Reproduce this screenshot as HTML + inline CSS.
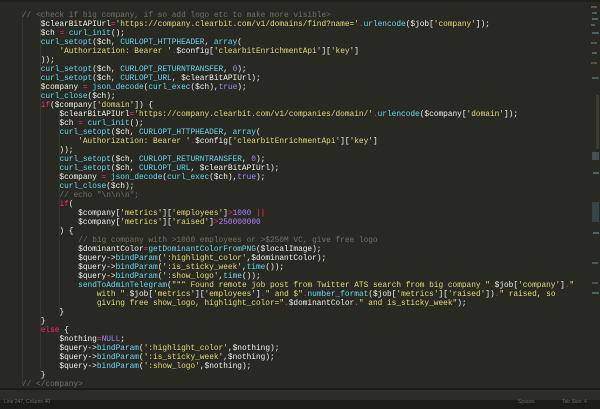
<!DOCTYPE html>
<html><head><meta charset="utf-8"><style>
html,body{margin:0;padding:0;width:600px;height:409px;overflow:hidden;background:#282923;}
.ed{position:absolute;left:0;top:0;width:600px;height:388px;background:#282923;}
.topbar{position:absolute;left:0;top:0;width:600px;height:2px;background:#1f201c;}
pre{position:absolute;left:22px;top:12px;margin:0;font-family:"Liberation Mono",monospace;font-size:7.8px;line-height:9px;color:#f2f2ec;white-space:pre;}
.c{color:#75715e}.s{color:#e6db74}.f{color:#66d9ef}.k{color:#f92672}.n{color:#ae81ff}
.g{position:absolute;top:12px;width:1px;background:#363731;}
.sep{position:absolute;left:0;top:388px;width:600px;height:2px;background:#1c1d19;}
.panel{position:absolute;left:0;top:390px;width:600px;height:10px;background:#2c2d28;}
.status{position:absolute;left:0;top:400px;width:600px;height:9px;background:#1b1b18;font-family:"Liberation Sans",sans-serif;font-size:5px;color:#6a6a64;line-height:14px;}
.mm{position:absolute;left:590px;top:2px;width:10px;height:386px;opacity:.6}
.mm div{position:absolute;height:1.5px;}
</style></head><body>
<div class="ed"></div>
<div class="topbar"></div>
<div class="g" style="left:22px;height:372px"></div>
<div class="g" style="left:40px;height:360px"></div>
<div class="g" style="left:59px;height:200px;top:112px"></div>
<pre><span class="c">// &lt;check if big company, if so add logo etc to make more visible&gt;</span>
    $clearBitAPIUrl<span class="k">=</span><span class="s">'https://company.clearbit.com/v1/domains/find?name='</span><span class="k">.</span><span class="f">urlencode</span>($job[<span class="s">'company'</span>]);
    $ch <span class="k">=</span> <span class="f">curl_init</span>();
    <span class="f">curl_setopt</span>($ch, <span class="f">CURLOPT_HTTPHEADER</span>, <span class="f">array</span>(
        <span class="s">'Authorization: Bearer '</span><span class="k">.</span>$config[<span class="s">'clearbitEnrichmentApi'</span>][<span class="s">'key'</span>]
    ));
    <span class="f">curl_setopt</span>($ch, <span class="f">CURLOPT_RETURNTRANSFER</span>, <span class="n">0</span>);
    <span class="f">curl_setopt</span>($ch, <span class="f">CURLOPT_URL</span>, $clearBitAPIUrl);
    $company <span class="k">=</span> <span class="f">json_decode</span>(<span class="f">curl_exec</span>($ch),<span class="n">true</span>);
    <span class="f">curl_close</span>($ch);
    <span class="k">if</span>($company[<span class="s">'domain'</span>]) {
        $clearBitAPIUrl<span class="k">=</span><span class="s">'https://company.clearbit.com/v1/companies/domain/'</span><span class="k">.</span><span class="f">urlencode</span>($company[<span class="s">'domain'</span>]);
        $ch <span class="k">=</span> <span class="f">curl_init</span>();
        <span class="f">curl_setopt</span>($ch, <span class="f">CURLOPT_HTTPHEADER</span>, <span class="f">array</span>(
            <span class="s">'Authorization: Bearer '</span><span class="k">.</span>$config[<span class="s">'clearbitEnrichmentApi'</span>][<span class="s">'key'</span>]
        ));
        <span class="f">curl_setopt</span>($ch, <span class="f">CURLOPT_RETURNTRANSFER</span>, <span class="n">0</span>);
        <span class="f">curl_setopt</span>($ch, <span class="f">CURLOPT_URL</span>, $clearBitAPIUrl);
        $company <span class="k">=</span> <span class="f">json_decode</span>(<span class="f">curl_exec</span>($ch),<span class="n">true</span>);
        <span class="f">curl_close</span>($ch);
        <span class="c">// echo "\n\n\n";</span>
        <span class="k">if</span>(
            $company[<span class="s">'metrics'</span>][<span class="s">'employees'</span>]<span class="k">&gt;</span><span class="n">1000</span> <span class="k">||</span>
            $company[<span class="s">'metrics'</span>][<span class="s">'raised'</span>]<span class="k">&gt;</span><span class="n">250000000</span>
        ) {
            <span class="c">// big company with &gt;1000 employees or &gt;$250M VC, give free logo</span>
            $dominantColor<span class="k">=</span><span class="f">getDominantColorFromPNG</span>($localImage);
            $query-&gt;<span class="f">bindParam</span>(<span class="s">':highlight_color'</span>,$dominantColor);
            $query-&gt;<span class="f">bindParam</span>(<span class="s">':is_sticky_week'</span>,<span class="f">time</span>());
            $query-&gt;<span class="f">bindParam</span>(<span class="s">':show_logo'</span>,<span class="f">time</span>());
            <span class="f">sendToAdminTelegram</span>(<span class="s">"❞❞ Found remote job post from Twitter ATS search from big company "</span><span class="k">.</span>$job[<span class="s">'company'</span>]<span class="k">.</span><span class="s">"</span>
<span class="s">                with "</span><span class="k">.</span>$job[<span class="s">'metrics'</span>][<span class="s">'employees'</span>]<span class="k">.</span><span class="s">" and $"</span><span class="k">.</span><span class="f">number_format</span>($job[<span class="s">'metrics'</span>][<span class="s">'raised'</span>])<span class="k">.</span><span class="s">" raised, so</span>
<span class="s">                giving free show_logo, highlight_color="</span><span class="k">.</span>$dominantColor<span class="k">.</span><span class="s">" and is_sticky_week"</span>);
        }
    }
    <span class="k">else</span> {
        $nothing<span class="k">=</span><span class="n">NULL</span>;
        $query-&gt;<span class="f">bindParam</span>(<span class="s">':highlight_color'</span>,$nothing);
        $query-&gt;<span class="f">bindParam</span>(<span class="s">':is_sticky_week'</span>,$nothing);
        $query-&gt;<span class="f">bindParam</span>(<span class="s">':show_logo'</span>,$nothing);
    }
<span class="c">// &lt;/company&gt;</span></pre>
<div class="mm">
<div style="top:4px;left:1px;width:6px;background:#8a6a7a"></div>
<div style="top:10px;left:2px;width:5px;background:#4f8a95"></div>
<div style="top:16px;left:2px;width:6px;background:#6a8a8a"></div>
<div style="top:22px;left:1px;width:4px;background:#7a7a6a"></div>
<div style="top:30px;left:2px;width:7px;background:#5a8a95"></div>
<div style="top:40px;left:1px;width:6px;background:#7a6a7a"></div>
<div style="top:50px;left:2px;width:5px;background:#5a8a95"></div>
<div style="top:60px;left:1px;width:6px;background:#6a6a6a"></div>
<div style="top:75px;left:2px;width:7px;background:#5a7a85"></div>
<div style="top:93px;left:6px;width:3px;height:54px;background:#4a4a32"></div>
<div style="top:150px;left:2px;width:7px;height:8px;background:#5a6a7a"></div>
<div style="top:170px;left:3px;width:6px;background:#6a8a95"></div>
<div style="top:200px;left:2px;width:7px;height:20px;background:#3f5a62"></div>
<div style="top:230px;left:3px;width:6px;background:#6a8a95"></div>
<div style="top:260px;left:2px;width:6px;background:#5a7a85"></div>
<div style="top:280px;left:2px;width:6px;background:#6a6a5a"></div>
<div style="top:290px;left:2px;width:7px;background:#5a8a95"></div>
</div>
<div class="sep"></div>
<div class="panel"></div>
<div class="status"><span style="position:absolute;left:4px;top:-5px">Line 247, Column 40</span><span style="position:absolute;left:518px;top:-5px">Spaces</span><span style="position:absolute;left:562px;top:-5px">Tab Size: 4</span></div>
</body></html>
